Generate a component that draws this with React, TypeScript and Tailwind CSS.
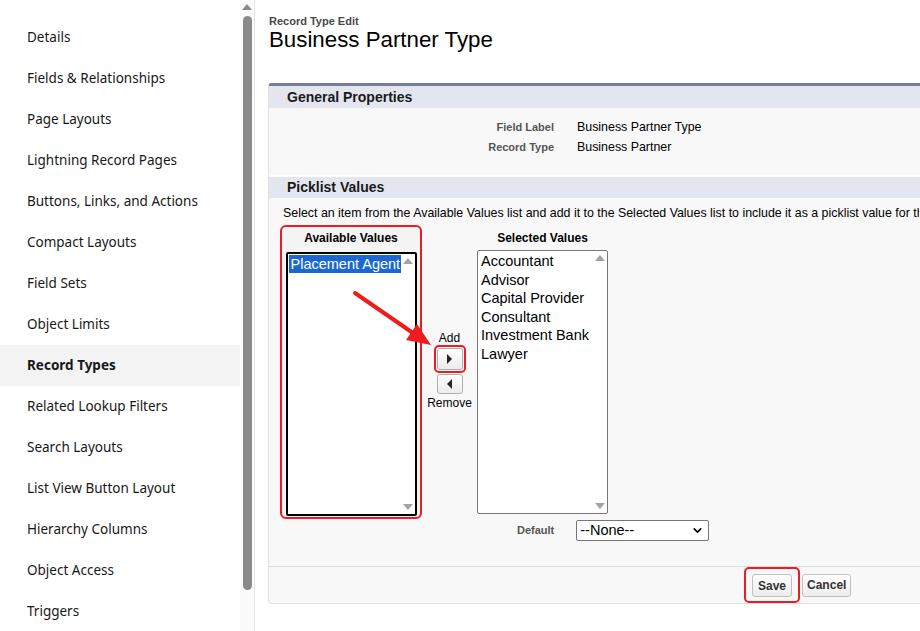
import { ChevronDown } from 'lucide-react'

const navItems = [
  'Details',
  'Fields & Relationships',
  'Page Layouts',
  'Lightning Record Pages',
  'Buttons, Links, and Actions',
  'Compact Layouts',
  'Field Sets',
  'Object Limits',
  'Record Types',
  'Related Lookup Filters',
  'Search Layouts',
  'List View Button Layout',
  'Hierarchy Columns',
  'Object Access',
  'Triggers',
]

const selected = ['Accountant', 'Advisor', 'Capital Provider', 'Consultant', 'Investment Bank', 'Lawyer']

function ListScroll() {
  return (
    <div className="flex w-[14px] shrink-0 flex-col items-center justify-between py-[4px]">
      <div className="h-0 w-0 border-x-[5px] border-b-[6px] border-x-transparent border-b-[#a3a3a3]" />
      <div className="h-0 w-0 border-x-[5px] border-t-[6px] border-x-transparent border-t-[#a3a3a3]" />
    </div>
  )
}

function Sidebar() {
  return (
    <div className="flex h-full shrink-0">
      <nav className="w-[240px] bg-white pt-[17px] font-['Noto_Sans',sans-serif] text-[13.5px] text-[#181818]">
        {navItems.map((item) => (
          <div
            key={item}
            className={
              'flex h-[41px] items-center pl-[27px] ' +
              (item === 'Record Types' ? 'bg-[#f3f3f3] font-bold' : '')
            }
          >
            {item}
          </div>
        ))}
      </nav>
      <div className="flex w-[14px] flex-col items-center bg-[#fbfbfb] pt-[4px]">
        <div className="h-0 w-0 border-x-[5px] border-b-[6px] border-x-transparent border-b-[#8a8a8a]" />
        <div className="mt-[6px] h-[574px] w-[9px] rounded-full bg-[#8a8a8a]" />
      </div>
      <div className="w-px bg-[#e5e5e5]" />
    </div>
  )
}

export default function App() {
  return (
    <div className="flex h-[631px] w-[920px] overflow-hidden bg-white font-['Liberation_Sans',Arial,sans-serif]">
      <Sidebar />
      <main className="relative min-w-0 flex-1 overflow-hidden pl-[13px]">
        <div className="pt-[15px] pl-px">
          <div className="text-[11px] font-bold leading-[13px] text-[#4a4a4a]">Record Type Edit</div>
          <h1 className="text-[22.3px] leading-[24px] text-black">Business Partner Type</h1>
        </div>

        <section className="mt-[31px] w-[700px] rounded-[4px] border-t-[3px] border-l border-[#747e96] border-l-[#e0e0e0] border-b border-b-[#e0e0e0] bg-[#f8f8f8]">
          <div className="flex h-[22px] items-center bg-[#e3e6ee] pl-[18px] text-[14px] font-bold text-[#1a1a1a]">
            General Properties
          </div>
          <div className="flex flex-col gap-[6px] pt-[12px] pb-[21px] text-[12.4px]">
            <div className="flex h-[14px] items-center">
              <span className="w-[285px] text-right text-[11px] font-bold text-[#555]">Field Label</span>
              <span className="ml-[23px] text-black">Business Partner Type</span>
            </div>
            <div className="flex h-[14px] items-center">
              <span className="w-[285px] text-right text-[11px] font-bold text-[#555]">Record Type</span>
              <span className="ml-[23px] text-black">Business Partner</span>
            </div>
          </div>
          <div className="h-[2px] bg-white" />
          <div className="flex h-[21px] items-center bg-[#e3e6ee] pl-[18px] text-[14px] font-bold text-[#1a1a1a]">
            Picklist Values
          </div>
          <p className="mt-[8px] w-[650px] overflow-hidden whitespace-nowrap pl-[14px] text-[12.4px] leading-[14px] text-black">
            Select an item from the Available Values list and add it to the Selected Values list to include it as a picklist value for this record type.
          </p>

          <div className="mt-[5px] flex pl-[11px]">
            <div className="flex h-[294px] w-[142px] flex-col items-center rounded-[6px] border-2 border-[#ea1c24] bg-[#f4f4f4] pt-[4px]">
              <div className="text-[12px] font-bold leading-[14px] text-black">Available Values</div>
              <div className="mt-[7px] flex h-[264px] w-[131px] rounded-[2px] border-2 border-black bg-white">
                <div className="min-w-0 flex-1 pl-px pt-px">
                  <div className="overflow-hidden whitespace-nowrap bg-[#1b68d3] pl-[2px] text-[14.5px] leading-[18px] text-white">
                    Placement Agent
                  </div>
                </div>
                <ListScroll />
              </div>
            </div>

            <div className="flex w-[55px] flex-col items-center pt-[106px] text-[12px] text-black">
              <span className="leading-[14px]">Add</span>
              <div className="rounded-[5px] border-2 border-[#ea1c24] p-px">
                <button className="flex h-[22px] w-[26px] items-center justify-center rounded-[3px] border border-[#b0b0b0] bg-gradient-to-b from-white to-[#ececec]">
                  <span className="h-0 w-0 border-y-[5px] border-l-[5px] border-y-transparent border-l-[#222]" />
                </button>
              </div>
              <button className="mt-[1px] flex h-[20px] w-[26px] items-center justify-center rounded-[3px] border border-[#b0b0b0] bg-gradient-to-b from-white to-[#ececec]">
                <span className="h-0 w-0 border-y-[5px] border-r-[5px] border-y-transparent border-r-[#222]" />
              </button>
              <span className="mt-[2px] leading-[14px]">Remove</span>
            </div>

            <div className="flex flex-col">
              <div className="w-[131px] pt-[6px] text-center text-[12px] font-bold leading-[14px] text-black">
                Selected Values
              </div>
              <div className="mt-[5px] flex h-[264px] w-[131px] rounded-[2px] border border-[#767676] bg-white">
                <div className="flex-1 pl-[3px] pt-px text-[14.5px] leading-[18.5px] text-black">
                  {selected.map((s) => (
                    <div key={s} className="whitespace-nowrap">
                      {s}
                    </div>
                  ))}
                </div>
                <ListScroll />
              </div>
              <div className="mt-[6px] flex items-start">
                <span className="ml-[40px] mt-[2px] text-[11px] font-bold text-[#555]">Default</span>
                <div className="ml-[22px] flex h-[21px] w-[133px] items-center justify-between rounded-[2px] border border-[#767676] bg-white pl-[3px] pr-[4px] text-[14.5px] text-black">
                  <span>--None--</span>
                  <ChevronDown size={13} strokeWidth={3} />
                </div>
              </div>
            </div>
          </div>

          <div className="mt-[25px] flex h-[37px] items-center border-t border-[#dddddd] pl-[475px]">
            <div className="rounded-[5px] border-2 border-[#ea1c24] px-[6px] py-[4px]">
              <button className="h-[23px] rounded-[3px] border border-[#c0c0c0] bg-gradient-to-b from-white to-[#ededed] px-[5px] text-[12px] font-bold text-[#333]">
                Save
              </button>
            </div>
            <button className="ml-[2px] h-[23px] rounded-[3px] border border-[#c0c0c0] bg-gradient-to-b from-white to-[#ededed] px-[4px] text-[12px] font-bold text-[#333]">
              Cancel
            </button>
          </div>
        </section>

        <svg className="pointer-events-none absolute left-0 top-0" width="665" height="631">
          <line x1="100" y1="293" x2="158" y2="333" stroke="#ee1c1c" strokeWidth="4" strokeLinecap="round" />
          <polygon points="176,345 151,340 162,324" fill="#ee1c1c" />
        </svg>
      </main>
    </div>
  )
}
